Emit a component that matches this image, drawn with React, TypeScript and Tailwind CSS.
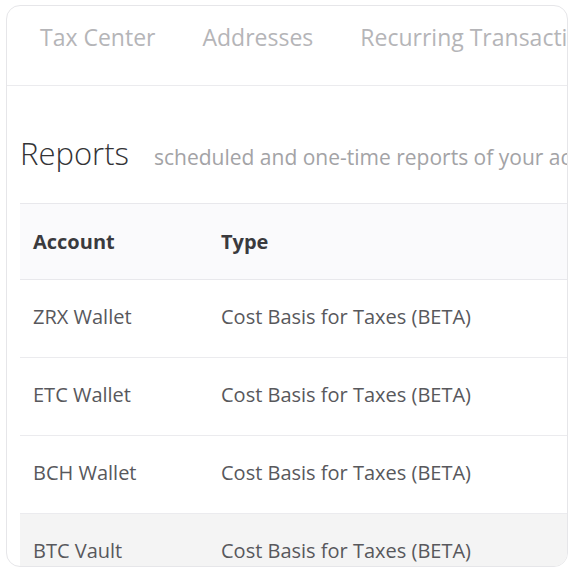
const tabs = ['Tax Center', 'Addresses', 'Recurring Transactions'];

const rows = [
  { account: 'ZRX Wallet', type: 'Cost Basis for Taxes (BETA)' },
  { account: 'ETC Wallet', type: 'Cost Basis for Taxes (BETA)' },
  { account: 'BCH Wallet', type: 'Cost Basis for Taxes (BETA)' },
  { account: 'BTC Vault', type: 'Cost Basis for Taxes (BETA)', active: true },
];

export default function App() {
  return (
    <div className="w-[578px] h-[572px] bg-white pt-[5px] pl-[6px] font-['Open_Sans','Lato',sans-serif]">
      <div className="w-[562px] h-[562px] border border-[#e6e6e9] rounded-[14px] overflow-hidden">
        <nav className="h-[80px] border-b border-[#ebebee] flex items-start gap-[47px] pl-[33px] pt-[16px] whitespace-nowrap">
          {tabs.map((t) => (
            <span key={t} className="text-[23px] leading-[30px] text-[#b5b5b8]">
              {t}
            </span>
          ))}
        </nav>

        <div className="pl-[13px]">
          <div className="flex items-baseline gap-[25px] pt-[48px] h-[117px] whitespace-nowrap">
            <h2 className="text-[31px] leading-[38px] font-light text-[#333336]">Reports</h2>
            <span className="text-[21px] text-[#a3a3a6]">scheduled and one-time reports of your account activity</span>
          </div>

          <div className="w-[700px] border-t border-[#e8e8ec]">
            <div className="flex items-center h-[76px] bg-[#fafafc] border-b border-[#e8e8ec] text-[20px] font-bold text-[#3a3a3e]">
              <div className="w-[201px] pl-[13px]">Account</div>
              <div>Type</div>
            </div>
            {rows.map((r) => (
              <div
                key={r.account}
                className={`flex items-center h-[78px] border-b border-[#ebebee] text-[20px] text-[#58585c] pb-[4px] ${
                  r.active ? 'bg-[#f4f4f4]' : 'bg-white'
                }`}
              >
                <div className="w-[201px] pl-[13px]">{r.account}</div>
                <div>{r.type}</div>
              </div>
            ))}
          </div>
        </div>
      </div>
    </div>
  );
}
